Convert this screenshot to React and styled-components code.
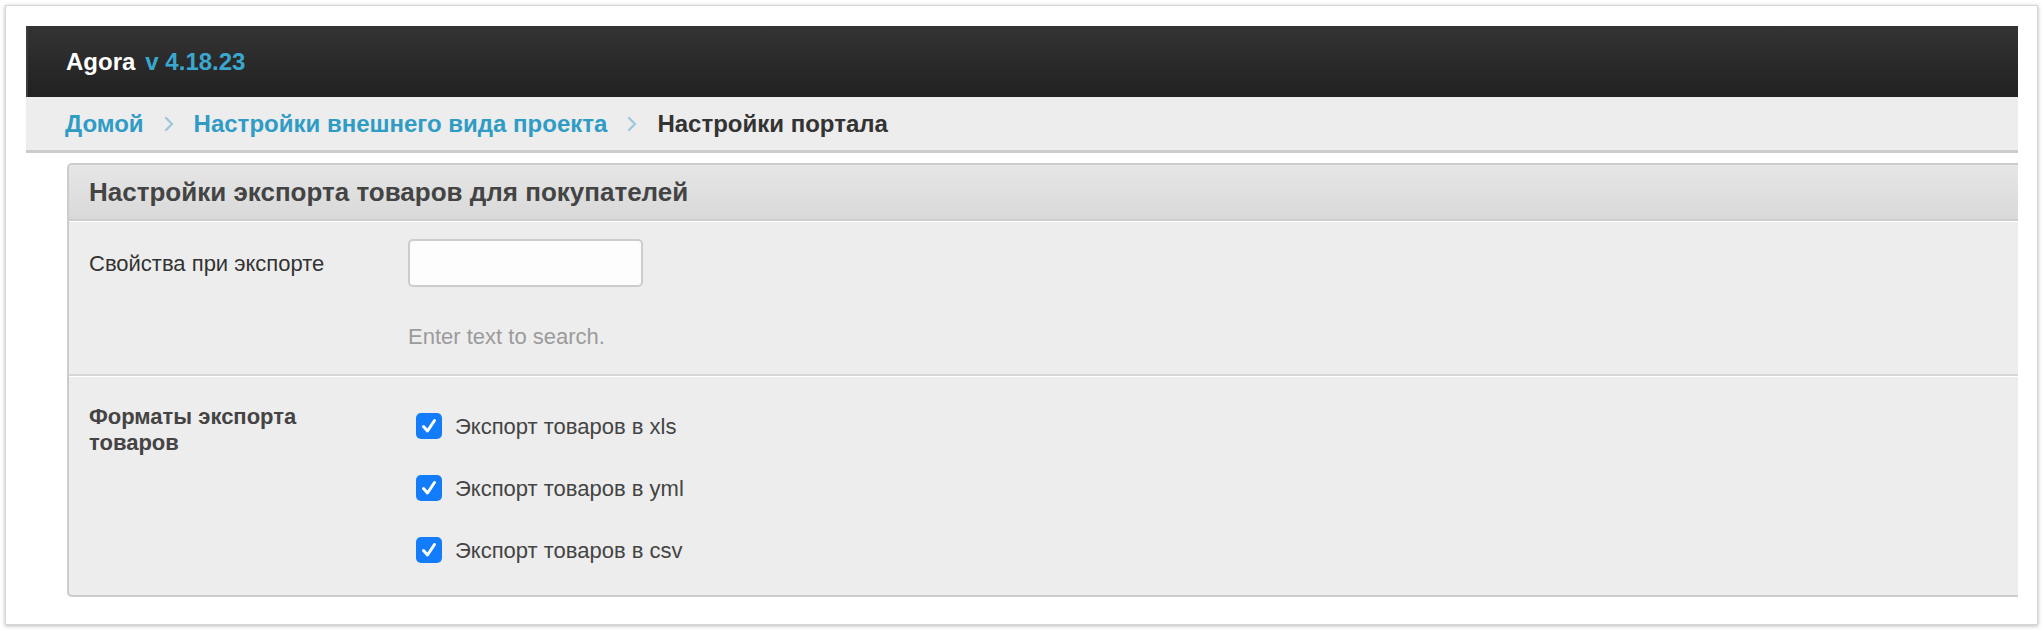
import React from "react";
import styled, { createGlobalStyle } from "styled-components";

const Global = createGlobalStyle`
  html, body { margin: 0; padding: 0; background: #ffffff; }
  body { font-family: "Liberation Sans", Arial, Helvetica, sans-serif; }
  * { box-sizing: border-box; }
`;

const Page = styled.div`
  padding: 5px 6px 6px 5px;
`;

const Frame = styled.div`
  width: 2033px;
  height: 620px;
  background: #fff;
  border: 1px solid #d6d6d6;
  box-shadow: 0 1px 4px rgba(0, 0, 0, 0.28);
  padding: 20px 19px 0 20px;
  overflow: hidden;
`;

const TopBar = styled.header`
  height: 71px;
  background: linear-gradient(to bottom, #343434, #212121);
  border-left: 2px solid #3c3c3c;
  display: flex;
  align-items: center;
  gap: 10px;
  padding-left: 38px;
  font-size: 24px;
  font-weight: 700;
`;

const Brand = styled.span`
  color: #ffffff;
`;

const Version = styled.span`
  color: #3aa7cf;
`;

const Crumbs = styled.nav`
  height: 56px;
  background: #ededed;
  border-bottom: 3px solid #cccccc;
  display: flex;
  align-items: center;
  gap: 19px;
  padding-left: 39px;
  font-size: 24px;
  font-weight: 700;
`;

const Crumb = styled.span`
  color: ${(p) => (p.$current ? "#333333" : "#2f9cc5")};
`;

const Sep = styled.svg`
  width: 12px;
  height: 18px;
  flex: none;
`;

const Content = styled.div`
  padding: 10px 0 0 41px;
`;

const Panel = styled.section`
  border: 2px solid #cccccc;
  border-right: none;
  border-radius: 5px 0 0 5px;
  background: #ededed;
  overflow: hidden;
`;

const PanelHead = styled.h2`
  margin: 0;
  height: 56px;
  line-height: 54px;
  padding-left: 20px;
  background: linear-gradient(to bottom, #e6e6e6, #d9d9d9);
  border-bottom: 2px solid #cccccc;
  font-size: 26px;
  font-weight: 700;
  color: #444444;
`;

const Row = styled.div`
  display: grid;
  grid-template-columns: 319px 1fr;
  padding: ${(p) => p.$pad};
  border-top: 1px solid #ffffff;
  border-bottom: ${(p) => (p.$last ? "none" : "2px solid #d6d6d6")};
`;

const Label = styled.div`
  font-size: 22px;
  line-height: 26px;
  color: ${(p) => (p.$bold ? "#444444" : "#333333")};
  font-weight: ${(p) => (p.$bold ? 700 : 400)};
  padding-top: ${(p) => p.$top};
  max-width: 260px;
`;

const Field = styled.div`
  display: flex;
  flex-direction: column;
  align-items: flex-start;
`;

const Input = styled.input`
  width: 235px;
  height: 48px;
  border: 2px solid #cccccc;
  border-radius: 5px;
  background: #fdfdfd;
  font-size: 22px;
  font-family: inherit;
  padding: 0 10px;
  outline: none;
`;

const Hint = styled.div`
  margin-top: 37px;
  font-size: 22px;
  line-height: 26px;
  color: #9b9b9b;
`;

const Check = styled.label`
  height: 62px;
  display: flex;
  align-items: center;
  gap: 13px;
  font-size: 22px;
  color: #444444;
`;

const Box = styled.span`
  width: 26px;
  height: 26px;
  margin-left: 8px;
  margin-top: -3px;
  border-radius: 5px;
  background: #127cfb;
  display: inline-flex;
  align-items: center;
  justify-content: center;
  flex: none;
`;

const Chevron = () => (
  <Sep viewBox="0 0 12 18">
    <polyline points="3,3 9,9 3,15" fill="none" stroke="#9cc9db" strokeWidth="2.4" strokeLinecap="round" strokeLinejoin="round" />
  </Sep>
);

const Tick = () => (
  <svg width="18" height="18" viewBox="0 0 18 18">
    <polyline points="3.5,9.5 7.5,14 14.5,3.5" fill="none" stroke="#ffffff" strokeWidth="3" strokeLinecap="round" strokeLinejoin="round" />
  </svg>
);

const formats = ["Экспорт товаров в xls", "Экспорт товаров в yml", "Экспорт товаров в csv"];

export default function App() {
  return (
    <Page>
      <Global />
      <Frame>
        <TopBar>
          <Brand>Agora</Brand>
          <Version>v 4.18.23</Version>
        </TopBar>
        <Crumbs>
          <Crumb>Домой</Crumb>
          <Chevron />
          <Crumb>Настройки внешнего вида проекта</Crumb>
          <Chevron />
          <Crumb $current>Настройки портала</Crumb>
        </Crumbs>
        <Content>
          <Panel>
            <PanelHead>Настройки экспорта товаров для покупателей</PanelHead>
            <Row $pad="17px 20px 24px">
              <Label $top="12px">Свойства при экспорте</Label>
              <Field>
                <Input type="text" />
                <Hint>Enter text to search.</Hint>
              </Field>
            </Row>
            <Row $pad="19px 20px 13px" $last>
              <Label $bold $top="8px">Форматы экспорта товаров</Label>
              <Field>
                {formats.map((f) => (
                  <Check key={f}>
                    <Box>
                      <Tick />
                    </Box>
                    {f}
                  </Check>
                ))}
              </Field>
            </Row>
          </Panel>
        </Content>
      </Frame>
    </Page>
  );
}
